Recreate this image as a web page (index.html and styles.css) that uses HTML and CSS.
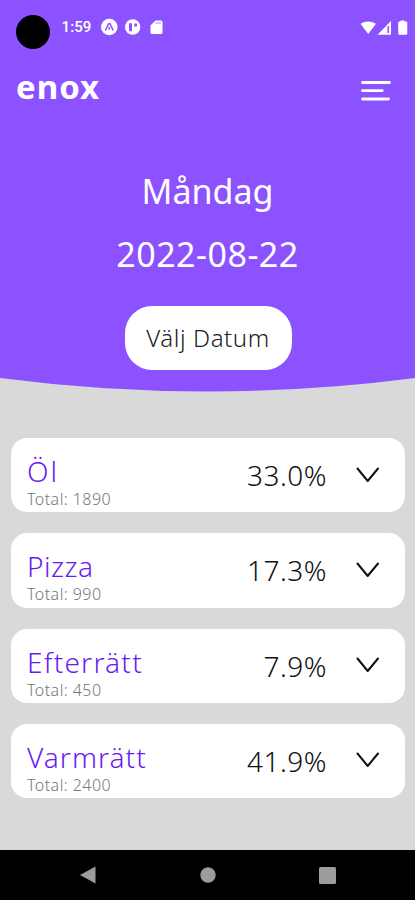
FILE: index.html
```html
<!DOCTYPE html>
<html lang="sv">
<head>
<meta charset="utf-8">
<meta name="viewport" content="width=device-width, initial-scale=1">
<title>enox</title>
<link rel="stylesheet" href="styles.css">
</head>
<body>
<div class="screen">
  <header class="hero">
    <div class="status">
      <span class="camera"></span>
      <span class="clock">1:59</span>
      <svg class="status-left" width="64" height="18" viewBox="0 0 64 18">
        <circle cx="9.3" cy="9" r="8.3" fill="#fff"/>
        <path d="M5.4 12.3 8.2 6.5q1.1-2 2.2 0l2.8 5.800M9.300 9v2.800" fill="none" stroke="#8c52ff" stroke-width="1.600"/>
        <circle cx="32.700" cy="9" r="7.700" fill="#fff"/>
        <path d="M29 5.200h3v8h-3zM34.200 5.400h2.800v3.200h-2.800z" fill="#8c52ff"/>
        <path d="M55.500 2.500H61q1.500 0 1.500 1.500v10.500q0 1.500-1.500 1.500h-9q-1.500 0-1.500-1.500V7.500z" fill="#fff"/>
        <path d="M55.500 5h5.500" stroke="#8c52ff" stroke-opacity=".6" stroke-width="1.200"/>
      </svg>
      <svg class="status-right" width="48" height="16" viewBox="0 0 48 16">
        <path d="M.5 3.800Q8.200-1 16 3.800L8.200 14z" fill="#fff"/>
        <path d="M31 1v13.800H17.500z" fill="#fff"/>
        <path d="M28.300 6v7" stroke="#8c52ff" stroke-width="1.600"/>
        <path d="M40.500 1.500V.5h4v1h1.500q1.300 0 1.300 1.300v10.700q0 1.300-1.300 1.300h-6.500q-1.300 0-1.300-1.300V2.800q0-1.300 1.300-1.300z" fill="#fff"/>
      </svg>
    </div>
    <div class="topbar">
      <div class="logo">enox</div>
      <svg class="menu" width="30" height="24" viewBox="0 0 30 24">
        <path d="M1.500 2.500h27M1.500 10.600h19.700M1.500 19h26" stroke="#fff" stroke-width="2.800" stroke-linecap="round"/>
      </svg>
    </div>
    <div class="day"><span>Måndag</span></div>
    <div class="date"><span>2022-08-22</span></div>
    <button class="pick"><span>Välj Datum</span></button>
  </header>
  <svg class="curve" width="415" height="14" viewBox="0 0 415 14">
    <path d="M0 0Q207.500 27 415 0z" fill="#8c52ff"/>
  </svg>
  <main class="list">
    <section class="card">
      <div class="info"><h2 class="ol">Öl</h2><p>Total: 1890</p></div>
      <div class="pct">33.0%</div>
      <svg class="chev" width="24" height="18" viewBox="0 0 24 18"><path d="M1.500 1.500 11.700 14 22 1.500"/></svg>
    </section>
    <section class="card">
      <div class="info"><h2 class="pizza">Pizza</h2><p>Total: 990</p></div>
      <div class="pct">17.3%</div>
      <svg class="chev" width="24" height="18" viewBox="0 0 24 18"><path d="M1.500 1.500 11.700 14 22 1.500"/></svg>
    </section>
    <section class="card">
      <div class="info"><h2 class="efter">Efterrätt</h2><p>Total: 450</p></div>
      <div class="pct">7.9%</div>
      <svg class="chev" width="24" height="18" viewBox="0 0 24 18"><path d="M1.500 1.500 11.700 14 22 1.500"/></svg>
    </section>
    <section class="card">
      <div class="info"><h2 class="varm">Varmrätt</h2><p>Total: 2400</p></div>
      <div class="pct">41.9%</div>
      <svg class="chev" width="24" height="18" viewBox="0 0 24 18"><path d="M1.500 1.500 11.700 14 22 1.500"/></svg>
    </section>
  </main>
  <nav class="nav">
    <svg width="16" height="18" viewBox="0 0 16 18"><path d="M15.500.500v17L0 9z" fill="#9c9c9c"/></svg>
    <svg width="16" height="16" viewBox="0 0 16 16"><circle cx="8" cy="8" r="7.700" fill="#9c9c9c"/></svg>
    <svg width="17" height="17" viewBox="0 0 17 17"><rect width="17" height="17" rx="1.500" fill="#9c9c9c"/></svg>
  </nav>
</div>
</body>
</html>
```
FILE: styles.css
```css
* { box-sizing: border-box; margin: 0; padding: 0; }
body { background: #d9d9d9; font-family: "Noto Sans", "Open Sans", sans-serif; }
.screen { width: 415px; height: 900px; display: flex; flex-direction: column; overflow: hidden; background: #d9d9d9; }
svg { display: block; flex: none; }

.hero { height: 378px; flex: none; background: #8c52ff; color: #fff; display: flex; flex-direction: column; align-items: center; }
.status { width: 100%; height: 60px; display: flex; align-items: flex-start; padding: 15px 7px 0 16px; }
.camera { width: 34px; height: 34px; border-radius: 50%; background: #000; }
.clock { margin: 3px 0 0 11.500px; width: 38.300px; font: 500 15px/18px Roboto, sans-serif; letter-spacing: .1px; }
.status-left { margin-top: 3px; }
.status-right { margin: 4.500px 0 0 auto; }

.topbar { width: 100%; height: 60px; padding: 0 24px 0 16px; display: flex; justify-content: space-between; }
.logo { font-weight: 700; font-size: 33px; line-height: 40px; margin-top: 7px; letter-spacing: 1px; }
.menu { margin-top: 20px; }

.day, .date { font-size: 34px; line-height: 44px; white-space: nowrap; }
.day { margin-top: 49px; }
.date { margin-top: 19px; letter-spacing: .5px; }
.pick { width: 167px; height: 64px; margin: 30px 0 0 1px; flex: none; border: 0; border-radius: 27px; background: #fff; color: #222; font: 300 24px/32px "Noto Sans", "Open Sans", sans-serif; letter-spacing: .6px; white-space: nowrap; }

.list { flex: 1; padding: 46px 10px 0 11px; display: flex; flex-direction: column; gap: 20.900px; }
.card { height: 74.400px; flex: none; background: #fff; border-radius: 16px; padding: 0 25px 0 16px; display: flex; }
.info { flex: 1; white-space: nowrap; }
.info h2 { font-weight: 300; font-size: 28px; line-height: 34px; margin-top: 16px; color: #6a1bf2; }
.info .ol { letter-spacing: 2px; }
.info .pizza { letter-spacing: .5px; }
.info .efter { letter-spacing: 1.250px; }
.info .varm { letter-spacing: 1.050px; }
.info p { font-weight: 300; font-size: 16px; line-height: 20px; margin-top: 1px; letter-spacing: .450px; color: #777; }
.pct { font-weight: 300; font-size: 28px; line-height: 36px; margin-top: 19px; letter-spacing: .500px; color: #111; }
.chev { margin: 28.500px 0 0 29px; }
.chev path { fill: none; stroke: #111; stroke-width: 2; stroke-linecap: round; stroke-linejoin: round; }

.nav { height: 50px; flex: none; background: #000; display: flex; justify-content: space-between; align-items: center; padding: 0 79px 0 80px; }
```
